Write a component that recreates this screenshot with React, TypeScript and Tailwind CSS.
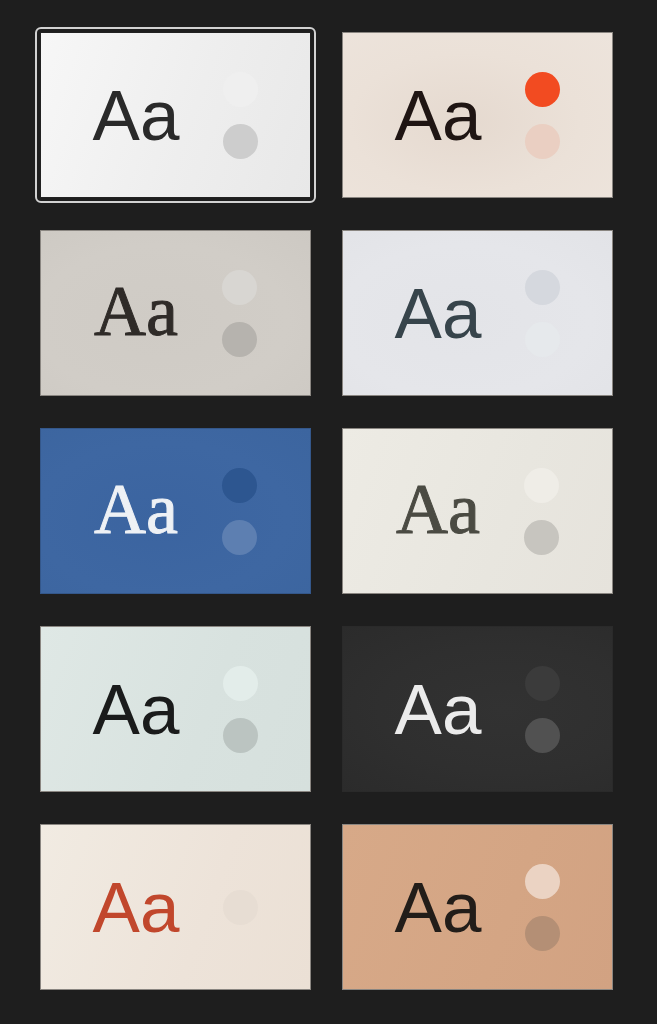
import React from "react";

type Theme = {
  bg: string;
  text: string;
  serif?: boolean;
  dots: string[];
  selected?: boolean;
  border?: string;
};

const themes: Theme[] = [
  {
    bg: "bg-[linear-gradient(110deg,#f7f7f7_0%,#eeeeee_55%,#e8e8e8_100%)]",
    text: "text-[#2a2a2a]",
    dots: ["bg-[#efefef]", "bg-[#cdcdcd]"],
    selected: true,
    border: "border-[#222222]",
  },
  {
    bg: "bg-[radial-gradient(ellipse_at_45%_55%,#e5d9cf_0%,#ebe1d8_55%,#ede4dc_100%)]",
    text: "text-[#1f1513]",
    dots: ["bg-[#f24b21]", "bg-[#eacfc2]"],
  },
  {
    bg: "bg-[radial-gradient(ellipse_at_45%_55%,#cfcbc5_0%,#d1cdc7_60%,#cdc9c3_100%)]",
    text: "text-[#2f2b28]",
    serif: true,
    dots: ["bg-[#d8d6d2]", "bg-[#b6b3ae]"],
  },
  {
    bg: "bg-[radial-gradient(ellipse_at_45%_55%,#e3e4e8_0%,#e5e6ea_60%,#e2e3e7_100%)]",
    text: "text-[#37444b]",
    dots: ["bg-[#d5d8de]", "bg-[#e6e9ec]"],
  },
  {
    bg: "bg-[radial-gradient(ellipse_at_45%_55%,#3b64a0_0%,#3e67a2_60%,#3c659f_100%)]",
    text: "text-[#eef1f5]",
    serif: true,
    dots: ["bg-[#2d5690]", "bg-[#5d7fb1]"],
    border: "border-[#34578a]",
  },
  {
    bg: "bg-[linear-gradient(110deg,#edebe4_0%,#e8e6df_60%,#e6e3dc_100%)]",
    text: "text-[#4b4b43]",
    serif: true,
    dots: ["bg-[#efede7]", "bg-[#c7c5bf]"],
  },
  {
    bg: "bg-[linear-gradient(110deg,#dfe8e5_0%,#d8e2df_60%,#d6e0dd_100%)]",
    text: "text-[#1a1b1b]",
    dots: ["bg-[#e3edea]", "bg-[#bbc4c1]"],
  },
  {
    bg: "bg-[radial-gradient(ellipse_at_60%_50%,#323232_0%,#2f2f2f_55%,#2b2b2b_100%)]",
    text: "text-[#ebebeb]",
    dots: ["bg-[#3b3b3b]", "bg-[#515151]"],
    border: "border-[#2a2a2a]",
  },
  {
    bg: "bg-[linear-gradient(110deg,#f1ebe2_0%,#ede3d9_60%,#ebe0d5_100%)]",
    text: "text-[#c1472c]",
    dots: ["bg-[#e7ddd3]"],
  },
  {
    bg: "bg-[linear-gradient(110deg,#d7a988_0%,#d4a584_60%,#d2a282_100%)]",
    text: "text-[#221d19]",
    dots: ["bg-[#ebd3c3]", "bg-[#b48f75]"],
  },
];

function Card({ t }: { t: Theme }) {
  return (
    <div className="relative">
      {t.selected && (
        <div className="pointer-events-none absolute -inset-[5px] rounded-[6px] border-2 border-[#d2d2d2]" />
      )}
      <div
        className={`flex h-[166px] w-[271px] items-center justify-center gap-[44px] border ${
          t.border ?? "border-[#8a8681]"
        } ${t.bg}`}
      >
        {t.serif ? (
          <span
            className={`text-[72px] leading-none -translate-y-[2px] [-webkit-text-stroke:1px_currentColor] ${t.text}`}
            style={{ fontFamily: '"Liberation Serif", "Times New Roman", serif' }}
          >
            Aa
          </span>
        ) : (
          <span
            className={`text-[71px] leading-none ${t.text}`}
            style={{ fontFamily: '"Liberation Sans", Arial, sans-serif' }}
          >
            Aa
          </span>
        )}
        <div className="flex flex-col gap-[17px]">
          {t.dots.map((d, i) => (
            <div key={i} className={`h-[35px] w-[35px] rounded-full ${d}`} />
          ))}
        </div>
      </div>
    </div>
  );
}

export default function App() {
  return (
    <div className="min-h-[1024px] w-full bg-[#1e1e1e] pl-[40px] pt-[32px]">
      <div className="grid grid-cols-[271px_271px] gap-x-[31px] gap-y-[32px]">
        {themes.map((t, i) => (
          <Card key={i} t={t} />
        ))}
      </div>
    </div>
  );
}
